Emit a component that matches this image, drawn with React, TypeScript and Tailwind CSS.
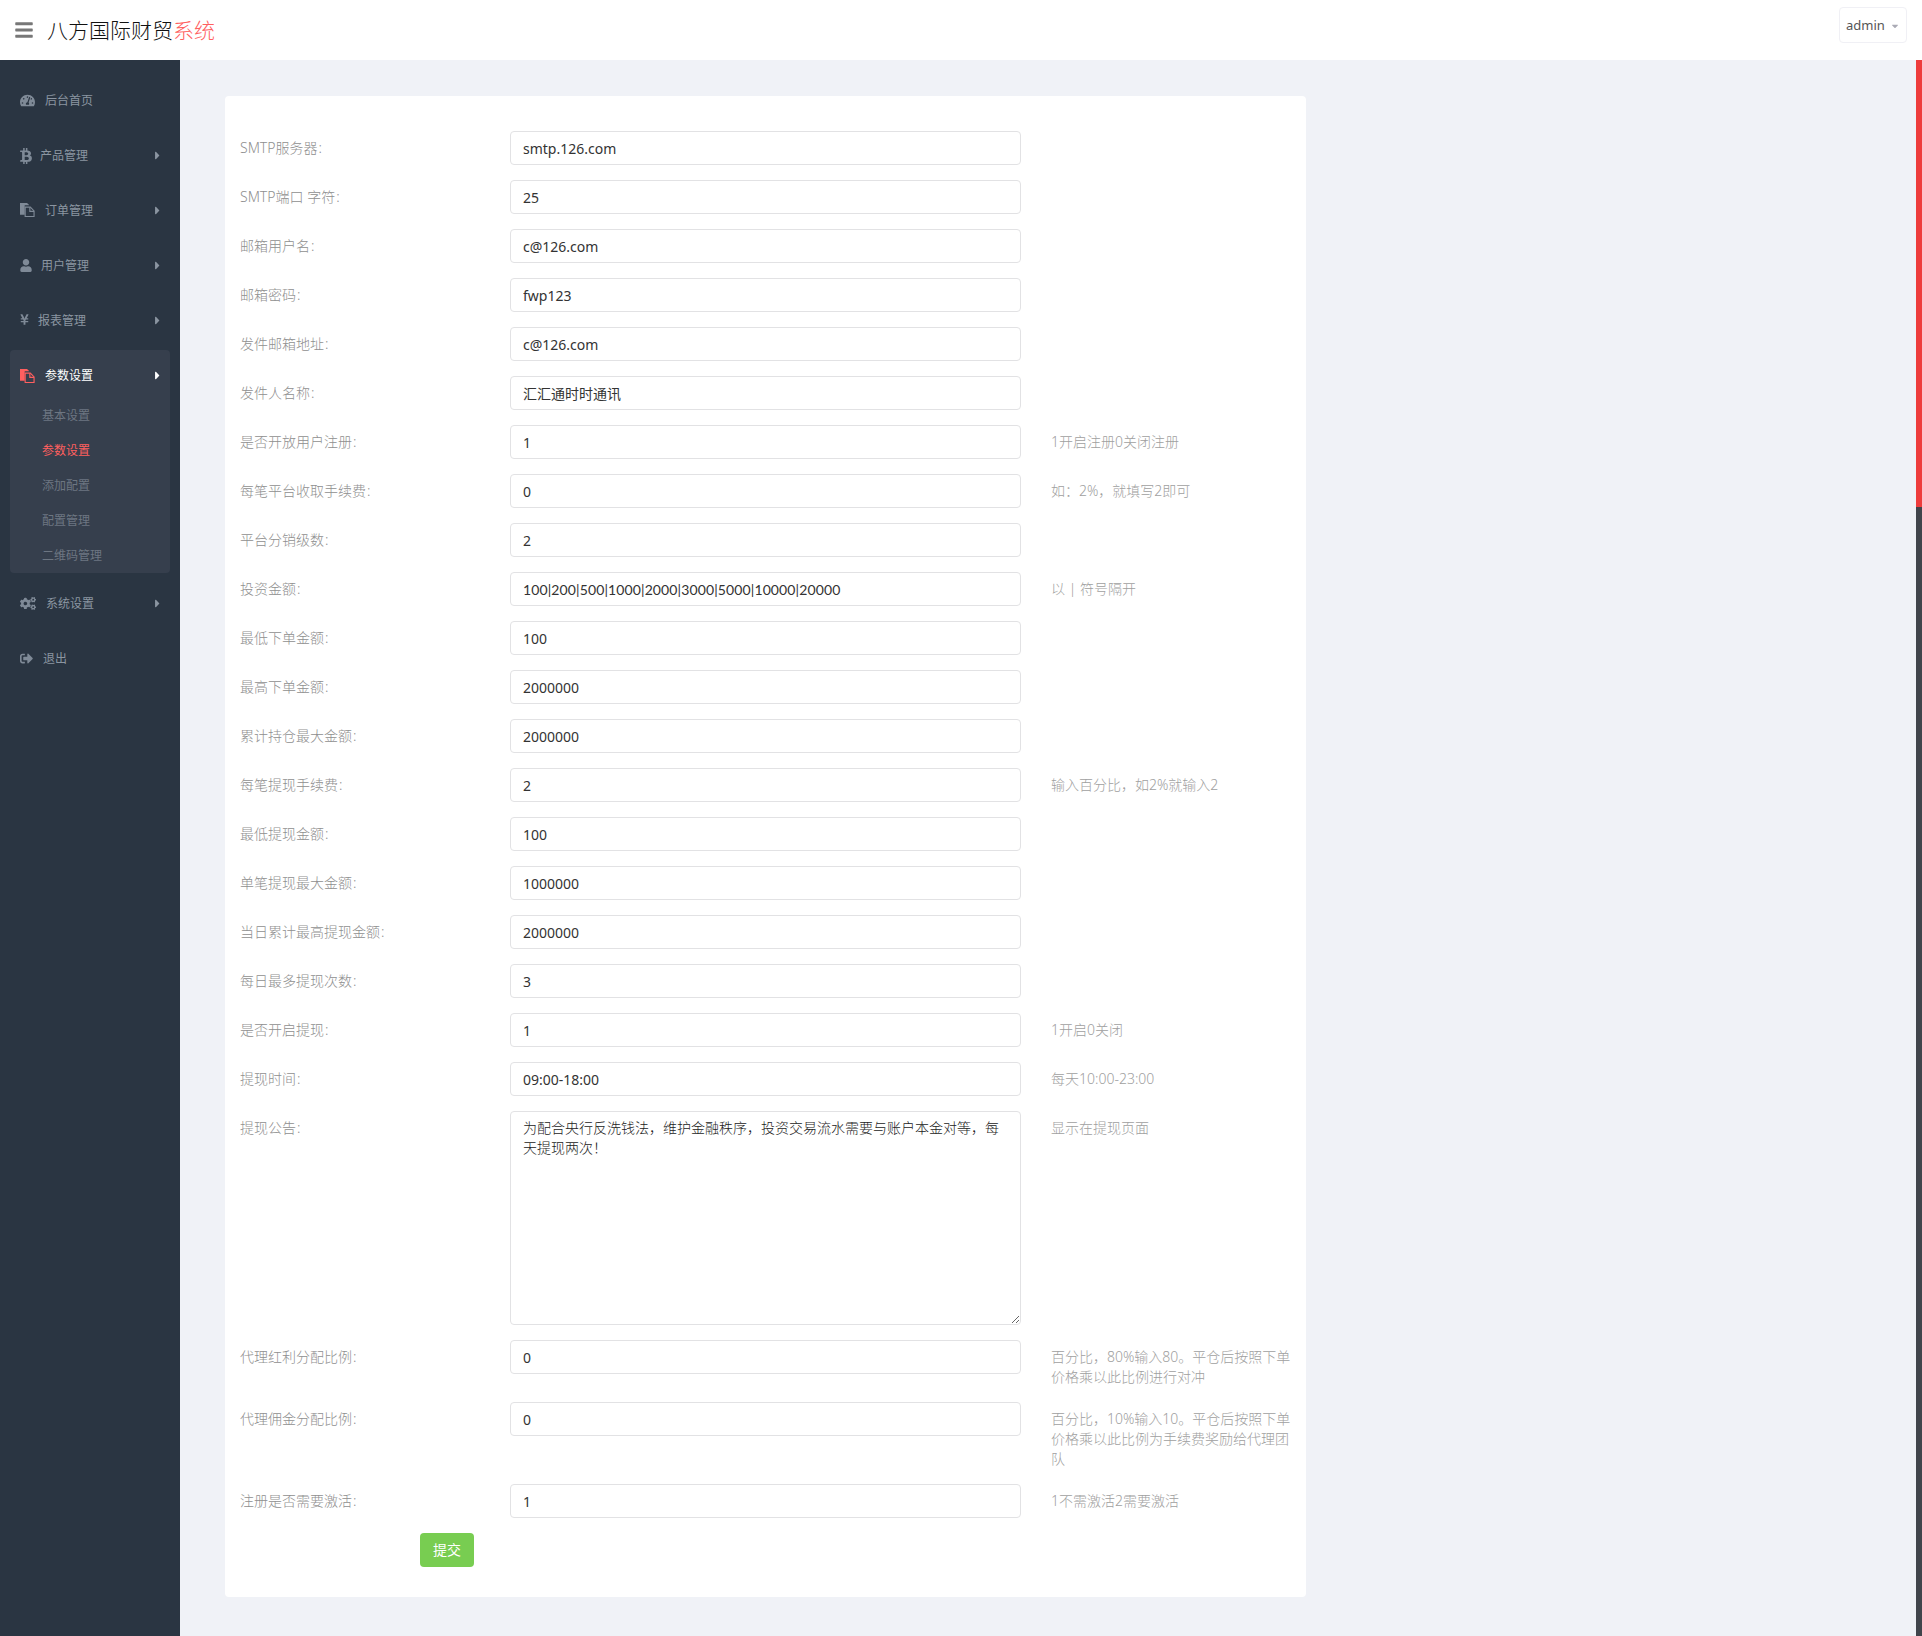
import { FaBars, FaBtc, FaCaretDown, FaCaretRight, FaCogs, FaSignOutAlt, FaTachometerAlt, FaUser, FaYenSign } from 'react-icons/fa';

function FilesIcon({ className }: { className?: string }) {
  return (
    <svg viewBox="0 0 16 16" className={className} fill="currentColor">
      <path d="M0 1h7.5l2.5 2.5H5v10H0z" />
      <path d="M5.5 5.5h5.5l4 4v6h-9.5z" fill="none" stroke="currentColor" strokeWidth="1.2" />
      <path d="M10.5 5.5v4.5h4.5" fill="none" stroke="currentColor" strokeWidth="1.2" />
    </svg>
  );
}

const topMenu = [
  { label: '后台首页', icon: <FaTachometerAlt className="w-[15px] h-[15px]" />, box: 'w-[25px]', arrow: false },
  { label: '产品管理', icon: <FaBtc className="w-[12px] h-[16px]" />, box: 'w-[20px]', arrow: true },
  { label: '订单管理', icon: <FilesIcon className="w-[15px] h-[15px] -mt-[2px]" />, box: 'w-[25px]', arrow: true },
  { label: '用户管理', icon: <FaUser className="w-[12px] h-[13px]" />, box: 'w-[21px]', arrow: true },
  { label: '报表管理', icon: <FaYenSign className="w-[9px] h-[13px] -mt-[3px]" />, box: 'w-[18px]', arrow: true },
];

const bottomMenu = [
  { label: '系统设置', icon: <FaCogs className="w-[16px] h-[15px]" />, box: 'w-[26px]', arrow: true },
  { label: '退出', icon: <FaSignOutAlt className="w-[13px] h-[13px]" />, box: 'w-[23px]', arrow: false },
];

const subMenu = ['基本设置', '参数设置', '添加配置', '配置管理', '二维码管理'];

const fields = [
  { label: 'SMTP服务器', value: 'smtp.126.com' },
  { label: 'SMTP端口 字符', value: '25' },
  { label: '邮箱用户名', value: 'c@126.com' },
  { label: '邮箱密码', value: 'fwp123' },
  { label: '发件邮箱地址', value: 'c@126.com' },
  { label: '发件人名称', value: '汇汇通时时通讯' },
  { label: '是否开放用户注册', value: '1', help: '1开启注册0关闭注册' },
  { label: '每笔平台收取手续费', value: '0', help: '如：2%，就填写2即可' },
  { label: '平台分销级数', value: '2' },
  { label: '投资金额', value: '100|200|500|1000|2000|3000|5000|10000|20000', help: '以 | 符号隔开' },
  { label: '最低下单金额', value: '100' },
  { label: '最高下单金额', value: '2000000' },
  { label: '累计持仓最大金额', value: '2000000' },
  { label: '每笔提现手续费', value: '2', help: '输入百分比，如2%就输入2' },
  { label: '最低提现金额', value: '100' },
  { label: '单笔提现最大金额', value: '1000000' },
  { label: '当日累计最高提现金额', value: '2000000' },
  { label: '每日最多提现次数', value: '3' },
  { label: '是否开启提现', value: '1', help: '1开启0关闭' },
  { label: '提现时间', value: '09:00-18:00', help: '每天10:00-23:00' },
  {
    label: '提现公告',
    value: '为配合央行反洗钱法，维护金融秩序，投资交易流水需要与账户本金对等，每天提现两次！',
    help: '显示在提现页面',
    area: true,
  },
  { label: '代理红利分配比例', value: '0', help: '百分比，80%输入80。平仓后按照下单价格乘以此比例进行对冲' },
  { label: '代理佣金分配比例', value: '0', help: '百分比，10%输入10。平仓后按照下单价格乘以此比例为手续费奖励给代理团队' },
  { label: '注册是否需要激活', value: '1', help: '1不需激活2需要激活' },
];

function MenuItem({ item }: { item: (typeof topMenu)[number] }) {
  return (
    <div className="mx-[10px] px-[10px] h-[55px] flex items-center text-[12px] text-[#8b95a1]">
      <span className={`${item.box} shrink-0 flex items-center text-[#7f8a97]`}>{item.icon}</span>
      <span className="flex-1">{item.label}</span>
      {item.arrow && <FaCaretRight className="w-[5px] h-[13px] text-[#8b95a1]" />}
    </div>
  );
}

export default function App() {
  return (
    <div className="w-[1922px] h-[1636px] overflow-hidden flex flex-col bg-[#f0f2f7] font-['Noto_Sans','Noto_Sans_CJK_SC',sans-serif]">
      <header className="h-[60px] shrink-0 bg-white flex items-center pl-[15px] pr-[15px]">
        <FaBars className="w-[18px] h-[20px] text-[#777777]" />
        <h1 className="ml-[14px] mt-[1px] text-[21px] font-light text-[#111111]">
          八方国际财贸<span className="text-[#ff5f5f]">系统</span>
        </h1>
        <div className="ml-auto -mt-[10px] w-[68px] h-[36px] border border-[#f0f0f5] rounded-[4px] flex items-center pl-[6px] pt-[1px] text-[13px] text-[#555555]">
          admin
          <FaCaretDown className="ml-[5px] w-[10px] h-[10px] text-[#aaaab5]" />
        </div>
      </header>

      <div className="flex-1 flex min-h-0">
        <aside className="w-[180px] shrink-0 bg-[#2a3542] pt-[13px]">
          {topMenu.map((item) => (
            <MenuItem key={item.label} item={item} />
          ))}

          <div className="mx-[10px] mt-[2px] h-[223px] rounded-[4px] bg-[#363f4d]">
            <div className="h-[48px] pt-[4px] px-[10px] flex items-center text-[12px] text-white">
              <span className="w-[25px] shrink-0 flex items-center text-[#ff5f5f]">
                <FilesIcon className="w-[15px] h-[15px] -mt-[2px]" />
              </span>
              <span className="flex-1">参数设置</span>
              <FaCaretRight className="w-[5px] h-[13px] -mt-[2px] text-white" />
            </div>
            {subMenu.map((label) => (
              <div
                key={label}
                className={`h-[35px] pl-[32px] flex items-center text-[12px] ${label === '参数设置' ? 'text-[#ff5f5f]' : 'text-[#6d7682]'}`}
              >
                {label}
              </div>
            ))}
          </div>

          <div className="mt-[3px]">
            {bottomMenu.map((item) => (
              <MenuItem key={item.label} item={item} />
            ))}
          </div>
        </aside>

        <main className="flex-1 pl-[45px] pt-[36px]">
          <form className="w-[1081px] bg-white rounded-[4px] px-[15px] pt-[35px] pb-[30px]">
            {fields.map((field) => (
              <div key={field.label} className="flex mb-[15px]">
                <label className="w-[270px] shrink-0 pt-[7px] text-[14px] leading-[20px] font-light text-[#8f8f8f]">
                  {field.label}
                  <span className="ml-[1px]">:</span>
                </label>
                {field.area ? (
                  <textarea
                    readOnly
                    value={field.value}
                    className="w-[511px] h-[214px] shrink-0 border border-[#e2e2e4] rounded-[4px] px-[12px] py-[6px] text-[14px] leading-[20px] font-light text-[#222222] outline-none"
                  />
                ) : (
                  <input
                    readOnly
                    value={field.value}
                    className={`w-[511px] h-[34px] shrink-0 border border-[#e2e2e4] rounded-[4px] px-[12px] text-[14px] text-[#333333] outline-none ${field.value.includes('|') ? "font-['Lato','Noto_Sans_CJK_SC',sans-serif] tracking-[0.12px]" : ''}`}
                  />
                )}
                {field.help && (
                  <p className="ml-[30px] w-[240px] pt-[7px] text-[14px] leading-[20px] font-light text-[#a0a0a0]">
                    {field.help}
                  </p>
                )}
              </div>
            ))}
            <button
              type="button"
              className="block ml-[180px] w-[54px] h-[34px] pb-[2px] rounded-[4px] bg-[#78cd51] text-[14px] text-white"
            >
              提交
            </button>
          </form>
        </main>

        <div className="w-[6px] shrink-0 flex flex-col">
          <div className="h-[447px] bg-[#ee3c3c]" />
          <div className="flex-1 bg-[#40444b]" />
        </div>
      </div>
    </div>
  );
}
